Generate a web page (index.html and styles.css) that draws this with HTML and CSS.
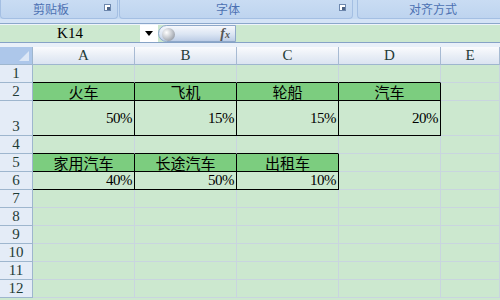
FILE: index.html
```html
<!DOCTYPE html>
<html lang="zh">
<head>
    <meta charset="UTF-8">
    <title>Excel</title>
    <link rel="stylesheet" href="styles.css">
</head>
<body>
    <div class="ribbon">
        <div class="group g1"><span class="label">剪贴板</span><i class="launch"></i></div>
        <div class="group g2"><span class="label">字体</span><i class="launch"></i></div>
        <div class="group g3"><span class="label">对齐方式</span></div>
    </div>
    <div class="band"></div>
    <div class="fbar">
        <div class="namebox">K14</div>
        <div class="drop"><svg width="8" height="5" viewBox="0 0 8 5"><path d="M0 0h8L4 5z" fill="#000"/></svg></div>
        <div class="fxbtn"><span class="knob"></span><em>f<small>x</small></em></div>
        <div class="formula"></div>
    </div>
    <div class="gap"></div>

    <div class="sheet">
        <!-- encabezado de columnas -->
        <div class="corner"><i></i></div>
        <div class="ch">A</div><div class="ch">B</div><div class="ch">C</div><div class="ch">D</div><div class="ch">E</div>

        <div class="rh">1</div>
        <div class="c bb"></div><div class="c bb"></div><div class="c bb"></div><div class="c bb"></div><div class="c"></div>

        <div class="rh">2</div>
        <div class="c k hd t">火车</div><div class="c k hd t">飞机</div><div class="c k hd t">轮船</div><div class="c k hd t">汽车</div><div class="c"></div>

        <div class="rh">3</div>
        <div class="c k n">50%</div><div class="c k n">15%</div><div class="c k n">15%</div><div class="c k n">20%</div><div class="c"></div>

        <div class="rh">4</div>
        <div class="c bb"></div><div class="c bb"></div><div class="c bb"></div><div class="c"></div><div class="c"></div>

        <div class="rh">5</div>
        <div class="c k hd t">家用汽车</div><div class="c k hd t">长途汽车</div><div class="c k hd t">出租车</div><div class="c"></div><div class="c"></div>

        <div class="rh">6</div>
        <div class="c k n">40%</div><div class="c k n">50%</div><div class="c k n">10%</div><div class="c"></div><div class="c"></div>

        <div class="rh">7</div><div class="c"></div><div class="c"></div><div class="c"></div><div class="c"></div><div class="c"></div>
        <div class="rh">8</div><div class="c"></div><div class="c"></div><div class="c"></div><div class="c"></div><div class="c"></div>
        <div class="rh">9</div><div class="c"></div><div class="c"></div><div class="c"></div><div class="c"></div><div class="c"></div>
        <div class="rh">10</div><div class="c"></div><div class="c"></div><div class="c"></div><div class="c"></div><div class="c"></div>
        <div class="rh">11</div><div class="c"></div><div class="c"></div><div class="c"></div><div class="c"></div><div class="c"></div>
        <div class="rh">12</div><div class="c"></div><div class="c"></div><div class="c"></div><div class="c"></div><div class="c"></div>
    </div>
</body>
</html>
```

FILE: styles.css
```css
* { box-sizing: border-box; }
body { margin: 0; width: 500px; height: 300px; overflow: hidden; background: #cce8cf; font-family: "Liberation Serif", serif; }

.ribbon { display: flex; height: 19px; background: #c5daf2; }
.group { position: relative; height: 19px; border: 1px solid #a4bfe3; border-top: none; border-radius: 0 0 4px 4px; background: linear-gradient(#c9dcf3, #bed4ef); display: flex; align-items: center; justify-content: center; }
.g1 { width: 118px; padding-right: 16px; }
.g2 { width: 234px; margin-left: 1px; padding-right: 16px; }
.g3 { flex: 1; margin-left: 4px; border-right: none; border-radius: 0 0 0 4px; padding-left: 8px; }
.label { font-family: "Noto Sans CJK SC", sans-serif; font-size: 12px; color: #4c71b2; line-height: 1; }
.launch { position: absolute; right: 6px; top: 4px; width: 7px; height: 7px; border: 1px solid #6d87ad; background: #fff; }
.launch::after { content: ""; position: absolute; right: 0; bottom: 0; width: 3px; height: 3px; background: #4d6385; }

.band { height: 5px; background: #d4e3f6; border-bottom: 1px solid #8ba7cb; }

.fbar { display: flex; height: 19px; border-top: 1px solid #eef3fb; border-bottom: 1px solid #86a2c6; }
.namebox { width: 140px; background: #cce8cf; font-size: 15px; color: #000; display: flex; align-items: center; justify-content: center; }
.drop { width: 18px; background: #fff; display: flex; align-items: center; justify-content: center; }
.fxbtn { position: relative; width: 78px; border: 1px solid #8ea8c9; border-radius: 9px 0 0 9px; background: linear-gradient(#f6f8fc, #dbe5f3 55%, #bccde6); display: flex; align-items: center; justify-content: flex-end; padding-right: 5px; }
.knob { position: absolute; left: 3px; top: 2px; width: 13px; height: 13px; border-radius: 50%; background: radial-gradient(circle at 35% 35%, #fff, #c5c9cf 45%, #8f959e 85%); }
.fxbtn em { font-size: 14px; font-weight: bold; color: #555; }
.fxbtn small { font-size: 10px; }
.formula { flex: 1; background: #cce8cf; }

.gap { height: 4px; background: #e9f0f9; }

.sheet { display: grid; grid-template-columns: 33px repeat(4, 102px) 1fr; grid-template-rows: 18px 18px 18px 35px repeat(9, 18px); }
.corner { position: relative; background: #adc7ea; border-right: 1px solid #9eb6ce; border-bottom: 1px solid #9eb6ce; }
.corner i { position: absolute; right: 3px; bottom: 3px; width: 0; height: 0; border-left: 10px solid transparent; border-bottom: 10px solid #dce7f6; }
.ch { background: linear-gradient(#fafbfd, #e6ecf5 60%, #dbe4f1); border-right: 1px solid #a7bad3; border-bottom: 1px solid #9eb6ce; font-size: 15px; color: #1f3b36; display: flex; align-items: center; justify-content: center; }
.rh { background: #e4ecf7; border-right: 1px solid #9eb6ce; border-bottom: 1px solid #9eb6ce; font-size: 15px; color: #1f3b36; display: flex; align-items: flex-end; justify-content: center; line-height: 17px; }
.c { border-right: 1px solid #c9d5df; border-bottom: 1px solid #c9d5df; display: flex; align-items: center; }
.bb { border-bottom-color: #000; }
.k { border-right-color: #000; border-bottom-color: #000; }
.hd { background: #7ccd7f; }
.t { justify-content: center; font-family: "Noto Sans CJK SC", sans-serif; font-size: 15px; line-height: 1; color: #000; }
.n { justify-content: flex-end; padding-right: 2px; font-size: 15px; letter-spacing: -0.5px; color: #000; }
```
